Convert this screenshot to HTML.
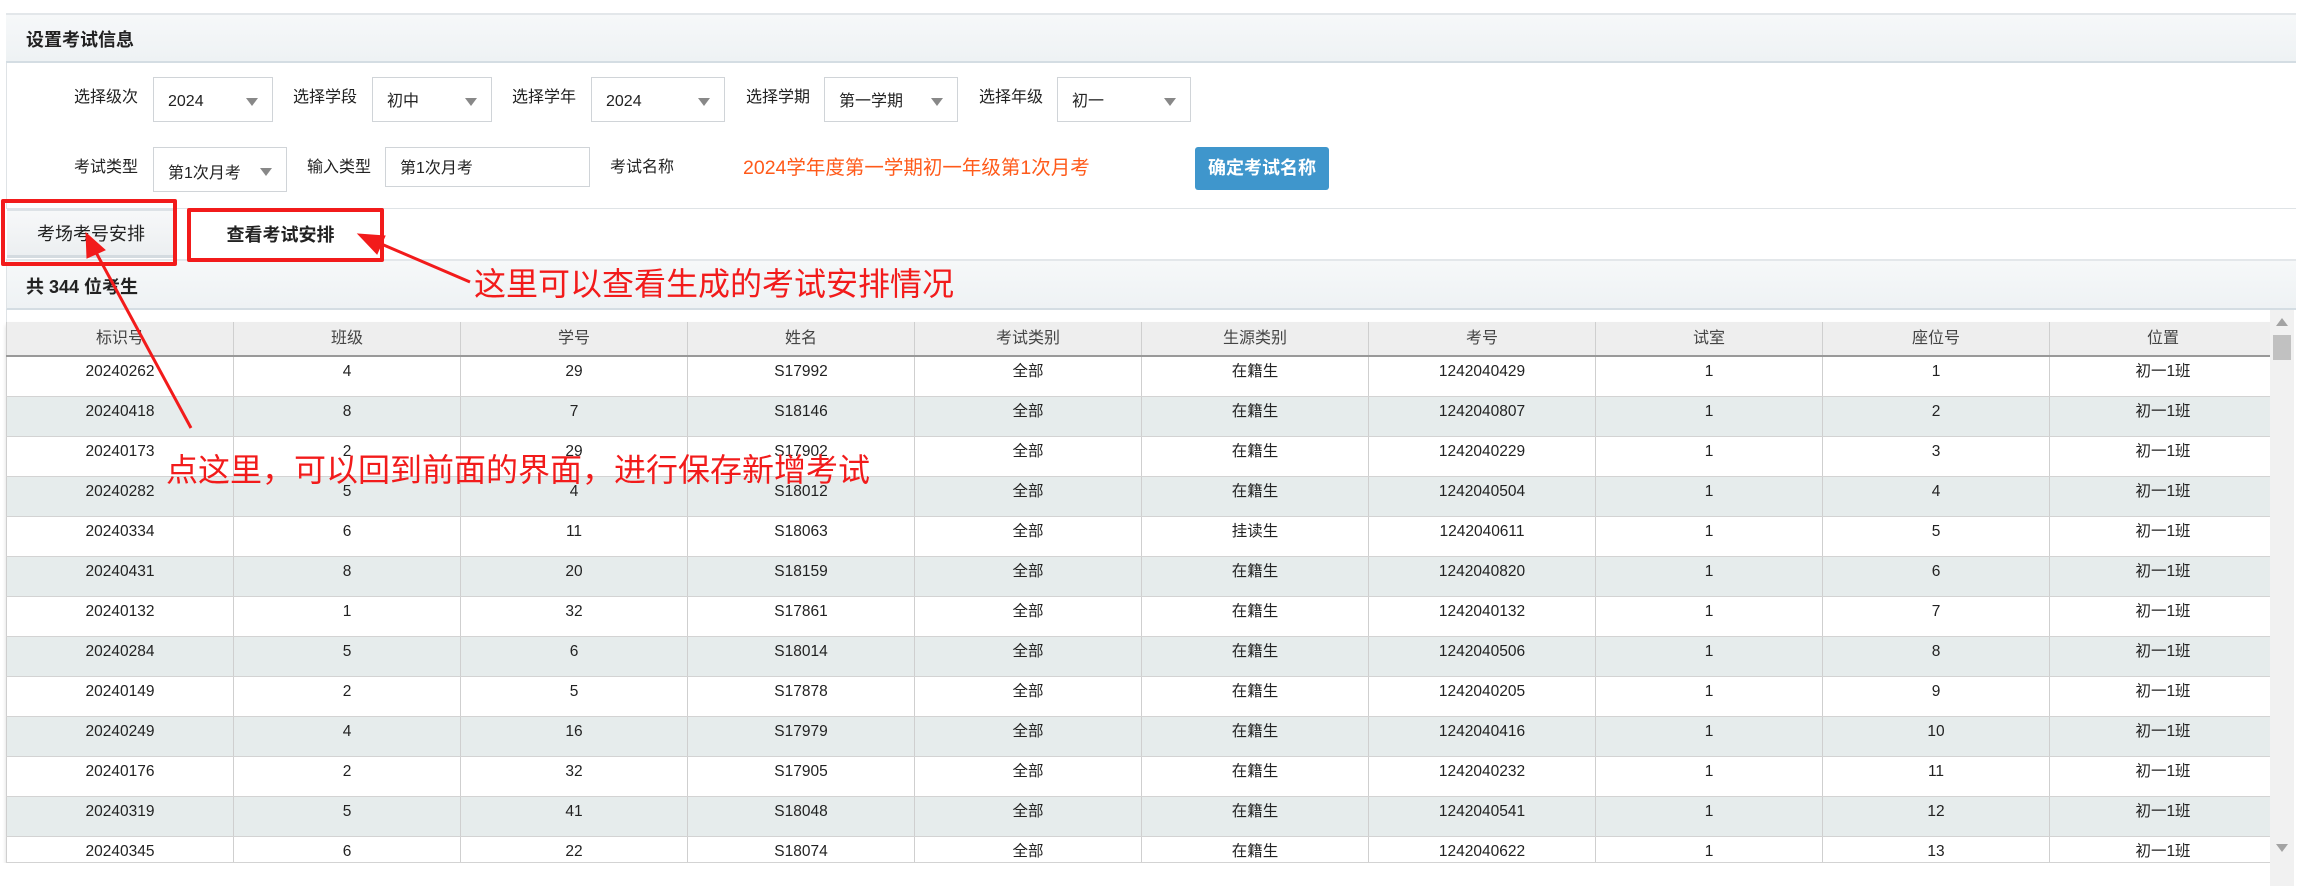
<!DOCTYPE html>
<html><head><meta charset="utf-8"><style>
*{margin:0;padding:0;box-sizing:border-box}
body{width:2298px;height:886px;background:#fff;position:relative;overflow:hidden;font-family:"Liberation Sans","Noto Sans CJK SC",sans-serif;color:#222}
.a{position:absolute}
.hdr{background:linear-gradient(#f6f8f9,#eef2f4);border-top:2px solid #e3e7ea;border-bottom:2px solid #d4dde3}
.lbl{font-size:16px;color:#222;line-height:20px}
.sel{border:1px solid #d0d4d8;background:#fff;font-size:16px;padding-left:14px;line-height:20px;padding-top:14px}
.sel:after{content:"";position:absolute;right:14px;top:20px;border-left:6px solid transparent;border-right:6px solid transparent;border-top:8px solid #888}
table{border-collapse:collapse;table-layout:fixed}
td,th{border-left:1px solid #cfcfcf;border-right:1px solid #cfcfcf;text-align:center;font-size:15.5px;font-weight:normal;width:227px;line-height:20px}
th{height:34px;background:#eeeeee;color:#444;border-bottom:2px solid #999;font-size:16px}
td{height:40px;vertical-align:top;padding-top:5px;border-bottom:1px solid #d3d3d3}
tr.g td{background:#e6ecec}
.red{color:#f21b1b;font-size:32px}
</style></head><body>
<div class="a" style="left:6px;top:13px;width:2290px;height:196px;border:1px solid #dfe3e6;border-right:none"></div>
<div class="a hdr" style="left:6px;top:13px;width:2290px;height:50px"></div>
<div class="a" style="left:26px;top:26px;font-size:18px;font-weight:bold">设置考试信息</div>

<div class="a lbl" style="left:74px;top:88px">选择级次</div>
<div class="a sel" style="left:153px;top:77px;width:120px;height:45px">2024</div>
<div class="a lbl" style="left:293px;top:88px">选择学段</div>
<div class="a sel" style="left:372px;top:77px;width:120px;height:45px">初中</div>
<div class="a lbl" style="left:512px;top:88px">选择学年</div>
<div class="a sel" style="left:591px;top:77px;width:134px;height:45px">2024</div>
<div class="a lbl" style="left:746px;top:88px">选择学期</div>
<div class="a sel" style="left:824px;top:77px;width:134px;height:45px">第一学期</div>
<div class="a lbl" style="left:979px;top:88px">选择年级</div>
<div class="a sel" style="left:1057px;top:77px;width:134px;height:45px">初一</div>

<div class="a lbl" style="left:74px;top:158px">考试类型</div>
<div class="a sel" style="left:153px;top:147px;width:134px;height:45px;padding-top:16px">第1次月考</div>
<div class="a lbl" style="left:307px;top:158px">输入类型</div>
<div class="a" style="left:385px;top:147px;width:205px;height:40px;border:1px solid #d0d4d8;font-size:16px;padding-left:14px;line-height:20px;padding-top:11px">第1次月考</div>
<div class="a lbl" style="left:610px;top:158px">考试名称</div>
<div class="a" style="left:743px;top:156px;font-size:19.5px;line-height:24px;color:#ff5a1a">2024学年度第一学期初一年级第1次月考</div>
<div class="a" style="left:1195px;top:147px;width:134px;height:43px;background:#3f96cc;border-radius:3px;color:#fff;font-weight:bold;font-size:18px;text-align:center;line-height:43px">确定考试名称</div>

<div class="a" style="left:7px;top:209px;width:168px;height:49px;background:linear-gradient(#f7f8f9,#eceff1);border-top:2px solid #dde2e6;border-bottom:3px solid #d4dbe0;font-size:18px;text-align:center;line-height:46px">考场考号安排</div>
<div class="a" style="left:190px;top:210px;width:181px;height:49px;background:#fff;border-top:2px solid #cfe3f2;font-size:18px;font-weight:bold;text-align:center;line-height:46px">查看考试安排</div>

<div class="a hdr" style="left:6px;top:259px;width:2290px;height:51px;border-left:1px solid #dfe3e6"></div>
<div class="a" style="left:26px;top:273px;font-size:18px;font-weight:bold">共 344 位考生</div>
<div class="a" style="left:6px;top:310px;width:1px;height:576px;background:#dfe3e6"></div>

<table class="a" style="left:6px;top:322px;box-shadow:0 3px 4px rgba(0,0,0,.15)">
<tr><th>标识号</th><th>班级</th><th>学号</th><th>姓名</th><th>考试类别</th><th>生源类别</th><th>考号</th><th>试室</th><th>座位号</th><th style="width:227px">位置</th></tr>
<tr><td>20240262</td><td>4</td><td>29</td><td>S17992</td><td>全部</td><td>在籍生</td><td>1242040429</td><td>1</td><td>1</td><td>初一1班</td></tr>
<tr class="g"><td>20240418</td><td>8</td><td>7</td><td>S18146</td><td>全部</td><td>在籍生</td><td>1242040807</td><td>1</td><td>2</td><td>初一1班</td></tr>
<tr><td>20240173</td><td>2</td><td>29</td><td>S17902</td><td>全部</td><td>在籍生</td><td>1242040229</td><td>1</td><td>3</td><td>初一1班</td></tr>
<tr class="g"><td>20240282</td><td>5</td><td>4</td><td>S18012</td><td>全部</td><td>在籍生</td><td>1242040504</td><td>1</td><td>4</td><td>初一1班</td></tr>
<tr><td>20240334</td><td>6</td><td>11</td><td>S18063</td><td>全部</td><td>挂读生</td><td>1242040611</td><td>1</td><td>5</td><td>初一1班</td></tr>
<tr class="g"><td>20240431</td><td>8</td><td>20</td><td>S18159</td><td>全部</td><td>在籍生</td><td>1242040820</td><td>1</td><td>6</td><td>初一1班</td></tr>
<tr><td>20240132</td><td>1</td><td>32</td><td>S17861</td><td>全部</td><td>在籍生</td><td>1242040132</td><td>1</td><td>7</td><td>初一1班</td></tr>
<tr class="g"><td>20240284</td><td>5</td><td>6</td><td>S18014</td><td>全部</td><td>在籍生</td><td>1242040506</td><td>1</td><td>8</td><td>初一1班</td></tr>
<tr><td>20240149</td><td>2</td><td>5</td><td>S17878</td><td>全部</td><td>在籍生</td><td>1242040205</td><td>1</td><td>9</td><td>初一1班</td></tr>
<tr class="g"><td>20240249</td><td>4</td><td>16</td><td>S17979</td><td>全部</td><td>在籍生</td><td>1242040416</td><td>1</td><td>10</td><td>初一1班</td></tr>
<tr><td>20240176</td><td>2</td><td>32</td><td>S17905</td><td>全部</td><td>在籍生</td><td>1242040232</td><td>1</td><td>11</td><td>初一1班</td></tr>
<tr class="g"><td>20240319</td><td>5</td><td>41</td><td>S18048</td><td>全部</td><td>在籍生</td><td>1242040541</td><td>1</td><td>12</td><td>初一1班</td></tr>
<tr><td style="height:26px">20240345</td><td>6</td><td>22</td><td>S18074</td><td>全部</td><td>在籍生</td><td>1242040622</td><td>1</td><td>13</td><td>初一1班</td></tr>
</table>
<div class="a" style="left:0;top:863px;width:2298px;height:23px;background:#fff"></div>
<div class="a" style="left:6px;top:862px;width:2264px;height:1px;background:#d3d3d3"></div>

<div class="a" style="left:2270px;top:310px;width:24px;height:576px;background:#f1f1f1"></div>
<div class="a" style="left:2276px;top:318px;border-left:6px solid transparent;border-right:6px solid transparent;border-bottom:8px solid #a3a3a3"></div>
<div class="a" style="left:2273px;top:335px;width:18px;height:25px;background:#c1c1c1"></div>
<div class="a" style="left:2276px;top:844px;border-left:6px solid transparent;border-right:6px solid transparent;border-top:8px solid #a3a3a3"></div>

<div class="a" style="left:1px;top:199px;width:176px;height:67px;border:4px solid #f21b1b;border-radius:2px"></div>
<div class="a" style="left:187px;top:208px;width:197px;height:54px;border:4px solid #f21b1b;border-radius:2px"></div>
<svg class="a" style="left:0;top:0" width="2298" height="886">
<g fill="#f21b1b" stroke="#f21b1b">
<line x1="470" y1="282" x2="372" y2="240" stroke-width="3"/>
<polygon points="358,234 385,236 377,254" stroke-width="1"/>
<line x1="191" y1="428" x2="92" y2="245" stroke-width="3"/>
<polygon points="86,233 105,250 87,258" stroke-width="1"/>
</g>
</svg>
<div class="a red" style="left:474px;top:259px">这里可以查看生成的考试安排情况</div>
<div class="a red" style="left:166px;top:445px">点这里，可以回到前面的界面，进行保存新增考试</div>
</body></html>
